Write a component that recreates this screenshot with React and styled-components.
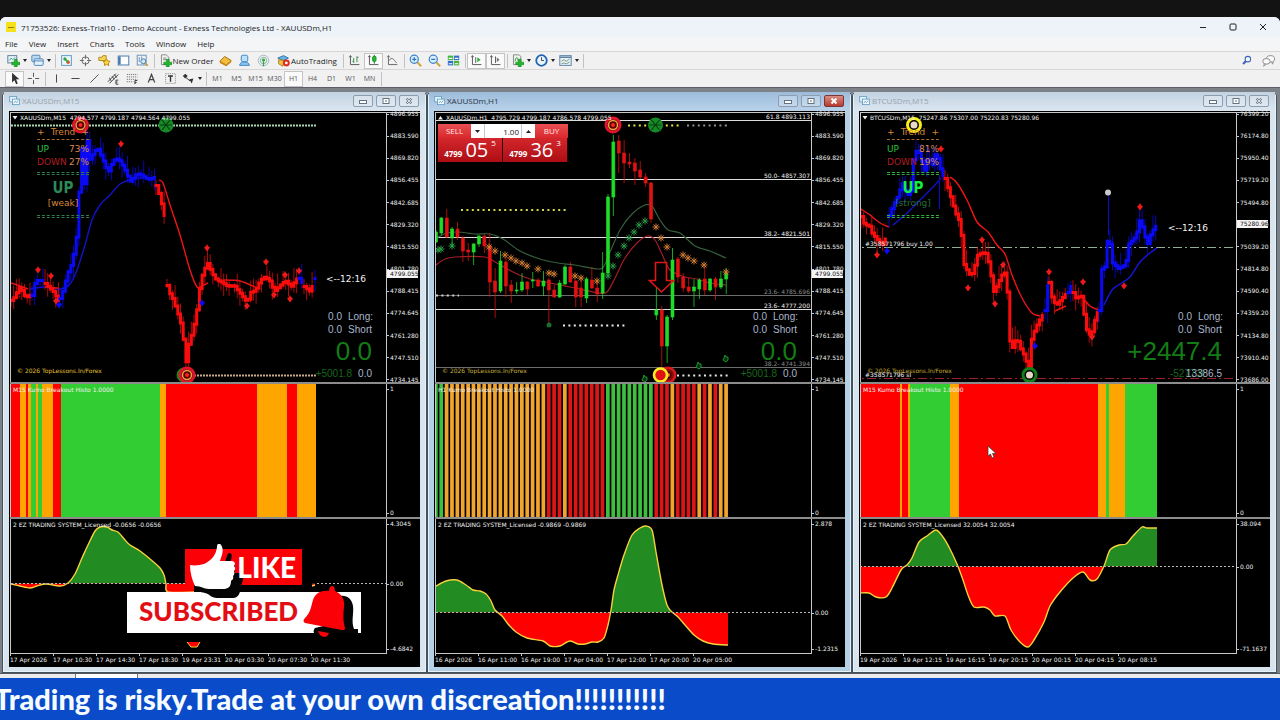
import React from "react";
import styled, { createGlobalStyle, css } from "styled-components";

const GlobalStyle = createGlobalStyle`
  * { box-sizing: border-box; }
  body { margin: 0; background: #131313; font-family: "Open Sans", "Noto Sans", sans-serif; }
  button, input { font: inherit; margin: 0; padding: 0; border: 0; background: none; color: inherit; }
  button { cursor: pointer; }
`;

const UI_FONT = `"Open Sans", "Noto Sans", sans-serif`;
const SCALE_FONT = `"DejaVu Sans", sans-serif`;
const PANEL_FONT = `"DejaVu Sans", sans-serif`;
const READOUT_FONT = `"Liberation Sans", sans-serif`;

/* ---------- application shell ---------- */

const Screen = styled.div`
  min-height: 100vh;
  display: flex;
  flex-direction: column;
  padding-top: 17px;
  background: #131313;
  overflow: hidden;
`;

const Shell = styled.div`
  flex: 1;
  display: flex;
  flex-direction: column;
  background: #f1f1f2;
  border-radius: 6px 6px 0 0;
  overflow: hidden;
  color: #1c1c1c;
`;

const AppTitle = styled.header`
  height: 20px;
  display: flex;
  align-items: center;
  gap: 5px;
  padding: 0 12px 0 6px;
  background: #edf3f8;
  font-size: 8px;
`;

const AppLogo = styled.span`
  width: 10px;
  height: 10px;
  display: flex;
  align-items: center;
  justify-content: center;
  background: #f7e11a;
  &::after { content: ""; width: 6px; height: 1px; background: #8b7d00; }
`;

const TitleText = styled.h1`
  flex: 1;
  margin: 0;
  font-size: 8px;
  font-weight: 400;
`;

const SystemButtons = styled.div`
  display: flex;
  gap: 20px;
`;

const SystemButton = styled.button`
  width: 10px;
  height: 12px;
  display: flex;
  align-items: center;
  justify-content: center;
`;

const MenuBar = styled.nav`
  height: 14px;
  display: flex;
  align-items: center;
  background: #f4f5f6;
`;

const MenuItem = styled.button`
  padding: 0 6px 0 5px;
  font-size: 8px;
  line-height: 12px;
`;

const ToolRow = styled.div`
  height: 18px;
  display: flex;
  align-items: center;
  padding-left: 5px;
  border-top: 1px solid #d6d6d6;
`;

const ToolSpacer = styled.div`
  flex: 1;
`;

const ToolButton = styled.button`
  width: ${(p) => p.$width || 19}px;
  height: 16px;
  display: flex;
  align-items: center;
  justify-content: center;
  gap: 1px;
  font-size: ${(p) => (p.$small ? 7 : 8)}px;
  color: ${(p) => (p.$small ? "#555" : "#1c1c1c")};
  white-space: nowrap;
  ${(p) => p.$pressed && css`
    background: #fafafa;
    border: 1px solid #c4c4c4;
  `}
`;

const Caret = styled.span`
  border: 2px solid transparent;
  border-top: 3px solid #222;
  border-bottom: 0;
  margin-left: 2px;
`;

const Separator = styled.span`
  width: 1px;
  height: 14px;
  margin: 0 1px 0 2px;
  background: #c2c2c2;
`;

const Workspace = styled.main`
  display: flex;
  padding: 4px 3px 0 2px;
  border-top: 1px solid #5d5f66;
  background: #7d8289;
`;

const TabStrip = styled.div`
  height: 5px;
  display: flex;
  border-top: 1px solid #55585c;
  background: #ececec;
  padding-left: 75px;
`;

const ActiveTab = styled.span`
  width: 63px;
  background: #ffffff;
  border-left: 1px solid #777;
  border-right: 1px solid #777;
`;

const Ticker = styled.footer`
  height: 42px;
  display: flex;
  align-items: center;
  overflow: hidden;
  background: #094bc9;
  color: #f6fbff;
`;

const TickerText = styled.p`
  margin: 0 0 0 -6px;
  font-family: Lato, sans-serif;
  font-size: 29px;
  font-weight: 900;
  line-height: 42px;
  white-space: nowrap;
`;

/* ---------- chart windows ---------- */

const ChartWindow = styled.section`
  position: relative;
  flex: 1;
  min-width: 0;
  padding: 0 7px 6px;
  border-radius: 4px 4px 0 0;
  background: ${(p) => (p.$active ? "#b5d0e5" : "#d8e4ee")};
  box-shadow: inset 0 0 0 1px #43525f, inset 0 0 0 2px #e8f2f9;
`;

const WindowTitle = styled.div`
  height: 19px;
  margin: 0 -5px;
  padding: 0 6px 2px 5px;
  display: flex;
  align-items: center;
  gap: 2px;
  background: ${(p) => (p.$active
    ? "linear-gradient(#9dbcdb, #b9d2ea)"
    : "linear-gradient(#c3d3e2, #dbe6f0)")};
  color: ${(p) => (p.$active ? "#2a3644" : "#97a2ad")};
`;

const WindowName = styled.h2`
  flex: 1;
  margin: 0;
  font-size: 8px;
  font-weight: 400;
`;

const FrameButtons = styled.div`
  display: flex;
  gap: 3px;
`;

const FrameButton = styled.button`
  width: 20px;
  height: 12px;
  display: flex;
  align-items: center;
  justify-content: center;
  border: 1px solid ${(p) => (p.$danger ? "#7d3434" : "#8d9dad")};
  border-radius: 2px;
  background: ${(p) => (p.$danger ? "linear-gradient(#d98c82, #b93a2e)" : "rgba(255,255,255,0.25)")};
`;

const ChartBody = styled.div`
  padding: 1px 0 0 1px;
  background: #000;
`;

const Pane = styled.div`
  display: flex;
  height: ${(p) => p.$height}px;
  border-top: ${(p) => p.$rule}px solid ${(p) => (p.$rule > 1 ? "#8c8c8c" : "#c8c8c8")};
`;

const Plot = styled.div`
  position: relative;
  flex: 1;
  min-width: 0;
  overflow: hidden;
  border-left: 1px solid #c8c8c8;
  border-right: 1px solid #c8c8c8;
`;

const Drawing = styled.svg`
  display: block;
  width: 100%;
  height: 100%;
`;

const PriceScale = styled.div`
  position: relative;
  width: 33px;
  margin: -3px 0 -2px;
  display: flex;
  flex-direction: column;
  justify-content: space-between;
`;

const SideScale = styled(PriceScale)`
  margin: 1px 0 0;
`;

const ScaleLabel = styled.span`
  display: flex;
  align-items: center;
  font-family: ${SCALE_FONT};
  font-size: 6px;
  line-height: 8px;
  color: #f0f0f0;
  &::before {
    content: "";
    width: 2px;
    height: 1px;
    margin-right: 1px;
    background: #c8c8c8;
  }
`;

const PriceTag = styled.span`
  position: absolute;
  left: 0;
  right: 2px;
  top: ${(p) => p.$top}px;
  padding-left: 3px;
  background: #f4f4f4;
  color: #111;
  font-family: ${SCALE_FONT};
  font-size: 6px;
  line-height: 8px;
`;

const ZeroTag = styled(ScaleLabel)`
  position: absolute;
  left: 0;
  top: ${(p) => p.$top}px;
`;

const TimeScale = styled.div`
  height: 14px;
  display: flex;
  margin-right: 33px;
  border-top: 1px solid #c8c8c8;
  overflow: hidden;
`;

const TimeLabel = styled.span`
  flex: 0 0 43px;
  min-width: 0;
  font-family: ${SCALE_FONT};
  font-size: 6px;
  line-height: 12px;
  color: #f0f0f0;
  white-space: nowrap;
  background: linear-gradient(#c8c8c8, #c8c8c8) 0 0 / 1px 2px no-repeat;
`;

/* ---------- overlays on the price pane ---------- */

const TrendPanel = styled.div`
  position: absolute;
  left: 26px;
  top: 13px;
  width: 52px;
  font-family: ${PANEL_FONT};
  font-size: 9px;
  line-height: 13px;
  color: #d9893a;
`;

const TrendRow = styled.div`
  display: flex;
  justify-content: ${(p) => (p.$center ? "center" : "space-between")};
  color: ${(p) => p.$color || "inherit"};
`;

const TrendSide = styled.span`
  color: ${(p) => (p.$up ? "#27c23c" : "#b31d24")};
`;

const TrendRule = styled.div`
  height: ${(p) => (p.$double ? 3 : 1)}px;
  margin: ${(p) => p.$gap || "0"};
  border-top: 1px dashed ${(p) => p.$color};
  border-bottom: ${(p) => (p.$double ? `1px dashed ${p.$color}` : "0")};
`;

const TrendCall = styled.div`
  font-family: "DejaVu Sans Condensed", ${READOUT_FONT};
  font-size: 15px;
  line-height: 18px;
  font-weight: 700;
  text-align: center;
  color: ${(p) => p.$color};
`;

const Readout = styled.div`
  position: absolute;
  right: 14px;
  bottom: 2px;
  font-family: ${READOUT_FONT};
  font-size: 10px;
  line-height: 13px;
  color: #a9b6cc;
  text-align: right;
`;

const ReadoutRow = styled.div`
  display: flex;
  justify-content: flex-end;
  gap: ${(p) => p.$gap}px;
`;

const ReadoutName = styled.span`
  width: 24px;
`;

const ReadoutTotal = styled.div`
  font-size: 26px;
  line-height: 31px;
  color: #137c15;
`;

const ReadoutGain = styled.span`
  color: #17671b;
  margin-right: ${(p) => (p.$crowded ? -24 : 0)}px;
`;

const TradePanel = styled.form`
  position: absolute;
  left: 2px;
  top: 11px;
  width: 130px;
  display: grid;
  grid-template-columns: 33px 32px 32px 33px;
  grid-template-rows: 14px 24px;
  font-family: ${UI_FONT};
  color: #fff;
`;

const TradeTab = styled.button`
  background: linear-gradient(#ea5052, #d8282c);
  font-size: 8px;
  line-height: 14px;
  color: #ffe4e4;
`;

const VolumeBox = styled.div`
  grid-column: span 2;
  display: flex;
  background: #fff;
  color: #222;
`;

const VolumeInput = styled.input`
  flex: 1;
  min-width: 0;
  text-align: right;
  padding-right: 2px;
  font-size: 8px;
  border-left: 1px solid #c8c8c8;
  border-right: 1px solid #c8c8c8;
`;

const VolumeStep = styled.button`
  width: 13px;
  display: flex;
  align-items: center;
  justify-content: center;
`;

const TradePrice = styled.button`
  grid-column: span 2;
  display: flex;
  align-items: flex-end;
  justify-content: center;
  gap: 3px;
  padding-bottom: 2px;
  border-right: 1px solid #2a0000;
  background: linear-gradient(#d3272c, #ad0d14);
  font-size: 8px;
  font-weight: 700;
  line-height: 12px;
`;

const PriceBig = styled.span`
  font-size: 20px;
  font-weight: 400;
  line-height: 20px;
`;

const PricePip = styled.sup`
  align-self: flex-start;
  font-size: 8px;
  font-weight: 400;
  line-height: 10px;
`;

/* ---------- stream banner ---------- */

const StreamBanner = styled.aside`
  position: absolute;
  left: 125px;
  top: 452px;
  width: 240px;
  height: 98px;
  padding-top: 5px;
  font-family: Lato, sans-serif;
  font-weight: 900;
`;

const LikeBox = styled.div`
  width: 117px;
  height: 36px;
  margin-left: 58px;
  padding-right: 6px;
  background: #fb0007;
  color: #fff;
  font-size: 28px;
  line-height: 36px;
  text-align: right;
`;

const LikeWord = styled.span`
  position: relative;
  z-index: 1;
`;

const SubscribedBox = styled.div`
  width: 234px;
  height: 41px;
  margin-top: 7px;
  padding-left: 12px;
  background: #fff;
  color: #e30d14;
  font-size: 26px;
  line-height: 39px;
`;

const BannerArt = styled.svg`
  position: absolute;
  inset: 0;
`;

const Pointer = styled.svg`
  position: absolute;
  left: 135px;
  top: 353px;
`;

/* ---------- icons ---------- */

const Icon = ({ children, size = 14 }) => (
  <svg width={size} height={size} viewBox="0 0 16 16" fill="none" strokeWidth="1.2" aria-hidden="true">{children}</svg>
);

const GreenPlus = () => (
  <path d="M9 6.500h3.500V10H16v3.200h-3.500V16H9v-2.800H5.800V10H9z" fill="#22b52b" stroke="#0b7a18" strokeWidth=".6" />
);

const ICONS = {
  newChart: <><rect x="1" y="2" width="11" height="9" fill="#e9f3fb" stroke="#5d7f9e" /><path d="M3 8l2-3 2 2 3-3" stroke="#4a8" /><GreenPlus /></>,
  profiles: <><rect x="1" y="1.500" width="10" height="8" rx="1" fill="#bcd9f1" stroke="#4f87b6" /><rect x="4" y="6" width="11" height="8" rx="1" fill="#e3f1fc" stroke="#4f87b6" /><path d="M4 8.500h11" stroke="#4f87b6" /></>,
  market: <><rect x="2" y="2" width="12" height="12" fill="#eef7fd" stroke="#5c9cc7" /><circle cx="6" cy="6" r="2" fill="#2ba83a" /><circle cx="10" cy="10" r="2.200" fill="#e2562c" /><path d="M6 6l4 4" stroke="#2ba83a" strokeWidth="2" /></>,
  data: <g stroke="#6b6b6b"><circle cx="8" cy="8" r="4.500" /><path d="M8 1v5M8 10v5M1 8h5M10 8h5" /></g>,
  navigator: <><path d="M1 4h4l1-2h4v6H1z" fill="#f6d65a" stroke="#b48c1a" /><path d="M10.500 6l1.400 2.700 3 .4-2.200 2.100.5 3-2.700-1.400-2.700 1.400.5-3L6 9.100l3-.4z" fill="#ffd83c" stroke="#b98a10" /></>,
  terminal: <><rect x="1.500" y="2.500" width="13" height="11" fill="#fff" stroke="#4779ad" /><path d="M3 3v10" stroke="#4779ad" strokeWidth="3" /></>,
  tester: <><rect x="1.500" y="1.500" width="11" height="12" fill="#eaf3fa" stroke="#6d93b5" /><path d="M4 4v6M7 3v4" stroke="#6d93b5" /><circle cx="9" cy="9" r="3" fill="#cfe6f6" stroke="#4a7da8" /><path d="M11.500 11.500l3 3" stroke="#c79b2e" strokeWidth="2" /></>,
  order: <><path d="M3 1h6l3 3v9H3z" fill="#f2f2f2" stroke="#8a8a8a" /><path d="M5 5h4M5 7h4" stroke="#8a8a8a" /><GreenPlus /></>,
  editor: <><path d="M1 9l6-6 8 5-6 6z" fill="#f3bd3f" stroke="#a76f0c" /><path d="M1 9l8 4 6-5v2l-6 5-8-4z" fill="#c98716" /></>,
  metaquotes: <><rect x="4" y="1.500" width="8" height="8" rx="2" fill="#bfe0f8" stroke="#3e8ac7" /><path d="M2 14c0-3 3-4 6-4s6 1 6 4z" fill="#8cc4ee" stroke="#3e8ac7" /></>,
  signal: <g stroke="#a5b6c4"><circle cx="8" cy="8" r="6.500" /><circle cx="8" cy="8" r="4" stroke="#7fb89a" /><circle cx="8" cy="7.500" r="2" fill="#35a84e" stroke="none" /><path d="M8 9v6" stroke="#35a84e" strokeWidth="1.500" /></g>,
  auto: <><path d="M1 5l7-3 6 3-6 3z" fill="#6bb3e6" stroke="#2f78b0" /><path d="M2 7v5l5 3 2-7z" fill="#f1c24a" stroke="#b1851c" /><circle cx="11.500" cy="11" r="4.200" fill="#dd2c1e" /><rect x="10" y="9.500" width="3" height="3" fill="#fff" /></>,
  bars: <g stroke="#5d5d5d"><path d="M3 2v11h11M1.500 4L3 2l1.500 2" /><path d="M7 5v6M11 3v7M11 4h2M5.500 9H7" stroke="#3b8f4b" /></g>,
  candles: <g stroke="#5d5d5d"><path d="M3 2v11h11M1.500 4L3 2l1.500 2" /><path d="M9 1v11" stroke="#138a22" /><rect x="7" y="3" width="4" height="6" rx="1" fill="#27c138" stroke="#138a22" /></g>,
  line: <g stroke="#6b6b6b"><path d="M3 2v11h11M1.500 4L3 2l1.500 2" /><path d="M4 8c3-5 5-2 9 3" /></g>,
  zoomIn: <><path d="M10 10l5 5" stroke="#cfa43a" strokeWidth="2.500" /><circle cx="6.500" cy="6.500" r="5" fill="#d8eefc" stroke="#3d83c5" strokeWidth="1.500" /><path d="M4 6.500h5M6.500 4v5" stroke="#2f78bd" strokeWidth="1.500" /></>,
  zoomOut: <><path d="M10 10l5 5" stroke="#cfa43a" strokeWidth="2.500" /><circle cx="6.500" cy="6.500" r="5" fill="#d8eefc" stroke="#3d83c5" strokeWidth="1.500" /><path d="M4 6.500h5" stroke="#2f78bd" strokeWidth="1.500" /></>,
  tile: <><rect x="1" y="2" width="6.500" height="5.500" fill="#46b33b" /><rect x="8.500" y="2" width="6.500" height="5.500" fill="#2f70c8" /><rect x="1" y="8.500" width="6.500" height="5.500" fill="#2f70c8" /><rect x="8.500" y="8.500" width="6.500" height="5.500" fill="#46b33b" /><path d="M2 5.500h4.500M9.500 5.500H14M2 12h4.500M9.500 12H14" stroke="#fff" strokeWidth="1.500" /></>,
  scroll: <g stroke="#5d5d5d"><path d="M3 2v11h11M1.500 4L3 2l1.500 2M7 4v7" /><path d="M9 4l4 3-4 3z" fill="#27a838" stroke="none" /></g>,
  shift: <g stroke="#5d5d5d"><path d="M3 2v11h11M1.500 4L3 2l1.500 2M8 3v8" /><path d="M9.500 4l3.500 3-3.500 3z" fill="#777" stroke="none" /></g>,
  indicators: <><path d="M3 1h7l2 2v10H3z" fill="#eaf5ea" stroke="#8a8a8a" /><path d="M5 9c1-6 3-6 4 0" stroke="#3a8d48" /><GreenPlus /></>,
  periods: <><circle cx="8" cy="8" r="6.500" fill="#e8f3fc" stroke="#1f64b4" strokeWidth="2.200" /><path d="M8 4v4h3" stroke="#444" /></>,
  templates: <><rect x="1" y="2" width="14" height="12" fill="#eaf2f8" stroke="#5c84a8" /><path d="M1 4h14" stroke="#5c84a8" strokeWidth="2" /><path d="M3 9l3-2 3 2 4-3M3 12l3-1 3 1 4-2" stroke="#739a7c" /></>,
  arrow: <path d="M5 1v12l3-3 2 5 2-1-2-5h4z" fill="#333" />,
  cross: <path d="M8 1v5M8 10v5M1 8h5M10 8h5" stroke="#555" />,
  vline: <path d="M8 3v10" stroke="#444" />,
  hline: <path d="M3 8h10" stroke="#444" />,
  trend: <path d="M3 13L13 3" stroke="#555" />,
  channel: <g stroke="#444"><path d="M1 12L11 2M3 14L14 3M3 7l2 4M6 5l3 4M9 3l3 4" /><path d="M14 10h-3v5h3M11 12.500h2" /></g>,
  fibo: <g stroke="#777" strokeDasharray="1.500 1"><path d="M1 3h13M1 6h13M1 9h13M1 12h8" /><path d="M14 10.500h-3V15M11 13h2" stroke="#333" strokeDasharray="none" /></g>,
  textTool: <path d="M4 13L8 3l4 10M5.500 9.500h5" stroke="#444" strokeWidth="1.500" />,
  labelTool: <><rect x="2" y="2" width="12" height="12" stroke="#999" strokeDasharray="1.500 1" /><path d="M5 5h6M8 5v7" stroke="#333" strokeWidth="1.700" /></>,
  shapes: <g fill="#333"><path d="M1 5l3-3 3 3-3 3z" /><path d="M5 7l5 4" stroke="#333" /><path d="M9 9l5-1-2 6z" /></g>,
  chartDoc: <><rect x="1" y="2" width="10" height="8" fill="#e6f3fb" stroke="#5f9cc0" /><rect x="5" y="6" width="10" height="8" fill="#f4fafd" stroke="#5f9cc0" /><path d="M7 12l2-3 2 2 2-3" stroke="#5f9cc0" /></>,
  search: <><circle cx="10" cy="6" r="4" fill="#eef5ff" stroke="#3f62b8" strokeWidth="1.500" /><path d="M7 9l-4 4" stroke="#3f62b8" strokeWidth="3" /></>,
  chat: <g fill="#fafafa" stroke="#8d8d8d"><ellipse cx="10.500" cy="6" rx="5" ry="4" /><path d="M12 9.500l1 3 1-4" /><ellipse cx="5.500" cy="9" rx="4.500" ry="3.500" /><path d="M3 12l-1 3 3-2.500" /></g>,
};

const MAIN_TOOLS = [
  { icon: "newChart", label: "New chart", menu: true },
  { icon: "profiles", label: "Profiles", menu: true },
  null,
  { icon: "market", label: "Market Watch" },
  { icon: "data", label: "Data Window" },
  { icon: "navigator", label: "Navigator" },
  { icon: "terminal", label: "Terminal" },
  { icon: "tester", label: "Strategy Tester" },
  null,
  { icon: "order", text: "New Order", width: 60 },
  { icon: "editor", label: "MetaEditor" },
  { icon: "metaquotes", label: "Community" },
  { icon: "signal", label: "Signals" },
  { icon: "auto", text: "AutoTrading", width: 68 },
  null,
  { icon: "bars", label: "Bar chart" },
  { icon: "candles", label: "Candlesticks", pressed: true },
  { icon: "line", label: "Line chart" },
  null,
  { icon: "zoomIn", label: "Zoom in" },
  { icon: "zoomOut", label: "Zoom out" },
  { icon: "tile", label: "Tile windows" },
  null,
  { icon: "scroll", label: "Auto scroll", pressed: true },
  { icon: "shift", label: "Chart shift", pressed: true },
  null,
  { icon: "indicators", label: "Indicators", menu: true },
  { icon: "periods", label: "Periods", menu: true },
  { icon: "templates", label: "Templates", menu: true },
  null,
];

const LINE_TOOLS = [
  { icon: "arrow", label: "Cursor", pressed: true },
  { icon: "cross", label: "Crosshair" },
  null,
  { icon: "vline", label: "Vertical line" },
  { icon: "hline", label: "Horizontal line" },
  { icon: "trend", label: "Trendline" },
  { icon: "channel", label: "Channel" },
  { icon: "fibo", label: "Fibonacci" },
  { icon: "textTool", label: "Text" },
  { icon: "labelTool", label: "Text label" },
  { icon: "shapes", label: "Arrows", menu: true },
  null,
  ...["M1", "M5", "M15", "M30", "H1", "H4", "D1", "W1", "MN"].map((text) => ({
    text, small: true, pressed: text === "H1",
  })),
  null,
];

const Tools = ({ items }) => items.map((tool, i) => (tool ? (
  <ToolButton
    key={i}
    type="button"
    aria-label={tool.label || tool.text}
    $pressed={tool.pressed}
    $small={tool.small}
    $width={tool.menu ? 24 : tool.width}
  >
    {tool.icon && <Icon size={13}>{ICONS[tool.icon]}</Icon>}
    {tool.text}
    {tool.menu && <Caret />}
  </ToolButton>
) : <Separator key={i} />));

/* ---------- chart primitives ---------- */

const RED = "#fb0d0d";
const BLUE = "#0a0af5";
const LIME = "#32cd32";
const ORANGE = "#ffa500";

/* Smooth curve through the points, without the leading move command. */
const curve = (points) => points.slice(1).map((p, i) => {
  const before = points[i - 1] || points[i];
  const from = points[i];
  const after = points[i + 2] || p;
  const c1 = [from[0] + (p[0] - before[0]) / 7, from[1] + (p[1] - before[1]) / 7];
  const c2 = [p[0] - (after[0] - from[0]) / 7, p[1] - (after[1] - from[1]) / 7];
  return `C${[c1, c2, p].map((q) => q.map((v) => v.toFixed(1)).join(" ")).join(",")}`;
}).join("");

function yAt(points, x) {
  for (let i = 1; i < points.length; i += 1) {
    const [x0, y0] = points[i - 1];
    const [x1, y1] = points[i];
    if (x <= x1) return y0 + ((y1 - y0) * (x - x0)) / (x1 - x0 || 1);
  }
  return points[points.length - 1][1];
}

/* Dense M15 bars: a body for every step along the run, wicks of varying reach. */
const BarRun = ({ color, points }) => {
  const bodies = [];
  const wicks = [];
  const last = points[points.length - 1][0];
  let prev = points[0][1];
  for (let x = points[0][0], i = 0; x <= last + 1; x += 2.7, i += 1) {
    const y = yAt(points, x);
    const top = Math.min(prev, y) - 1;
    const low = Math.max(prev, y) + 2;
    const reach = (Math.round(x) * 37 + i * 11) % 14;
    bodies.push(`M${x} ${top}V${low}`);
    wicks.push(`M${x} ${top - reach}V${low + ((reach * 5) % 12)}`);
    prev = y;
  }
  return (
    <g stroke={color} fill="none">
      <path d={bodies.join("")} strokeWidth="3" />
      <path d={wicks.join("")} strokeWidth="1" opacity=".7" />
    </g>
  );
};

const Average = ({ color, points, width = 1.4 }) => (
  <path d={`M${points[0].join(" ")}${curve(points)}`} fill="none" stroke={color} strokeWidth={width} />
);

const Diamonds = ({ color, at }) => (
  <path fill={color} d={at.map(([x, y]) => `M${x} ${y - 4}l1 2 2 1.500-3 4-3-4 2-1.500z`).join("")} />
);

const Dots = ({ x1, x2, y, color, gap = "2 1" }) => (
  <path d={`M${x1} ${y}H${x2}`} stroke={color} strokeWidth="2" strokeDasharray={gap} />
);

const Target = ({ x, y, outer, ring, core }) => (
  <g>
    <circle cx={x} cy={y} r="7" fill="#140404" stroke={outer} strokeWidth="3" />
    <circle cx={x} cy={y} r="4.500" fill="#500" stroke={ring} strokeWidth="1.500" />
    <circle cx={x} cy={y} r="2" fill={core} />
  </g>
);

const Orb = ({ x, y }) => (
  <g>
    <circle cx={x} cy={y} r="7.500" fill="#168a25" />
    <path d={`M${x - 6} ${y}h12M${x - 4} ${y - 5}l8 10M${x + 4} ${y - 5}l-8 10`} stroke="#0a3d10" strokeWidth="1.200" />
  </g>
);

const Spot = ({ x, y, ring }) => (
  <g>
    <circle cx={x} cy={y} r="6.500" fill="#000" stroke={ring} strokeWidth="3" />
    <circle cx={x} cy={y} r="3.500" fill="#e9d9c8" />
  </g>
);

const Flowers = ({ color, at }) => (
  <path
    stroke={color}
    strokeWidth="1"
    d={at.map(([x, y]) => `M${x - 3.5} ${y}h7M${x} ${y - 3.5}v7M${x - 2.5} ${y - 2.5}l5 5M${x + 2.5} ${y - 2.5}l-5 5`).join("")}
  />
);

const ChartText = styled.text`
  font-family: ${(p) => p.$font || SCALE_FONT};
  font-size: ${(p) => p.$size || 6}px;
  fill: ${(p) => p.$color || "#f2f2f2"};
  white-space: pre;
`;

const Indicator = ({ id, runs, zero, dots = [[0, 2400]] }) => (
  <>
    <clipPath id={`${id}-up`}><rect x="0" y="500" width="1300" height={zero - 500} /></clipPath>
    <clipPath id={`${id}-down`}><rect x="0" y={zero} width="1300" height="100" /></clipPath>
    {runs.map((points, i) => {
      const start = points[0][0];
      const end = points[points.length - 1][0];
      const shape = curve(points);
      const area = `M${start} ${zero}L${points[0].join(" ")}${shape}L${end} ${zero}Z`;
      return (
        <g key={i}>
          <path d={area} fill="#228b22" clipPath={`url(#${id}-up)`} />
          <path d={area} fill="#ff0000" clipPath={`url(#${id}-down)`} />
          <path d={`M${points[0].join(" ")}${shape}`} fill="none" stroke="#f5d23c" strokeWidth="1.400" />
        </g>
      );
    })}
    {dots.map(([a, b]) => (
      <path key={a} d={`M${a} ${zero}H${b}`} stroke="#b9b9b9" strokeDasharray="2 2" />
    ))}
  </>
);

/* ---------- XAUUSDm M15 ---------- */

const goldM15Runs = [
  [RED, [[11, 300], [14, 297], [18, 289], [20, 286], [24, 295], [29, 297], [31, 292]]],
  [BLUE, [[32, 295], [34, 284], [37, 280], [43, 280]]],
  [RED, [[45, 283], [50, 288], [54, 292], [58, 300]]],
  [BLUE, [[60, 298], [63, 290], [67, 274], [72, 262], [76, 240], [79, 190], [81, 138], [84, 188], [87, 140], [89, 160], [92, 155], [97, 147], [103, 160], [108, 172], [113, 160], [118, 158], [124, 168], [130, 181], [137, 173], [142, 175], [148, 179], [154, 177]]],
  [RED, [[156, 185], [160, 197], [164, 215]]],
  [RED, [[167, 285], [169, 292], [172, 297], [176, 308], [180, 320], [183, 335], [185, 372], [187, 348], [190, 340], [193, 328], [196, 315], [199, 290], [202, 275], [207, 262], [212, 273], [216, 279], [222, 282], [228, 286], [234, 285], [240, 293], [247, 302], [250, 292], [255, 290], [260, 280], [265, 276], [270, 281], [274, 291], [280, 285], [285, 280], [291, 286], [297, 278]]],
  [BLUE, [[299, 278], [301, 282]]],
  [RED, [[304, 286], [310, 291], [313, 284]]],
  [BLUE, [[315, 278], [316, 276]]],
];

const GoldM15Drawing = () => (
  <>
    <Dots x1={11} x2={316} y={125.5} color="#a8d8b4" />
    <Average color="#e01616" points={[[11, 283], [20, 286], [28, 289]]} />
    <Average color="#1212c8" points={[[30, 289], [44, 287], [60, 289], [70, 284], [77, 270], [85, 245], [92, 220], [100, 205], [110, 195], [120, 184], [130, 180], [140, 178], [152, 178]]} />
    <Average color="#e01616" points={[[45, 287], [58, 288]]} />
    <Average color="#f01414" points={[[159, 180], [163, 183], [170, 205], [180, 235], [190, 270], [197, 287], [202, 286], [208, 283]]} />
    <Average color="#e01616" points={[[223, 280], [240, 281], [255, 287]]} />
    {goldM15Runs.map(([color, points], i) => <BarRun key={i} color={color} points={points} />)}
    <Diamonds color="#f01a1a" at={[[38, 270], [51, 276], [56, 301], [121, 144], [207, 248], [247, 306], [266, 262], [274, 295], [285, 275], [290, 299], [299, 271]]} />
    <Diamonds color={BLUE} at={[[59, 305], [202, 303]]} />
    <Target x={80.5} y={125} outer="#e3122c" ring="#f0a33a" core="#ff2222" />
    <Orb x={166} y={125} />
    <Dots x1={188} x2={316} y={375.5} color="#c9a986" />
    <circle cx="184" cy="375" r="7.500" fill="#118a1b" />
    <Target x={187} y={375} outer="#e3122c" ring="#f0a33a" core="#ff2222" />
    <path d="M12.500 116h5l-2.500 3.500z" fill="#eee" />
    <ChartText x="20" y="120">XAUUSDm,M15  4794.577 4799.187 4794.564 4799.055</ChartText>
    <ChartText x="326" y="282" $font={PANEL_FONT} $size={9}>{"<--12:16"}</ChartText>
    <ChartText x="17" y="373" $color="#e2c136">© 2026 TopLessons.In/Forex</ChartText>
  </>
);

/* ---------- XAUUSDm H1: [up, high, top, bottom, low] ---------- */

const H1_STEP = 5.375;
const goldH1Bars = [
  [1, 230, 232, 242, 243], [1, 217, 218, 233, 235], [0, 209, 218, 237, 238], [1, 227, 229, 238, 247], [0, 222, 229, 237, 240],
  [0, 236, 238, 251, 262], [0, 243, 250, 252, 261], [1, 243, 244, 252, 265], [1, 235, 236, 244, 247], [0, 234, 236, 246, 253],
  [0, 233, 246, 282, 297], [0, 268, 281, 292, 318], [1, 251, 261, 291, 293], [0, 257, 262, 286, 297], [0, 280, 285, 291, 303],
  [1, 282, 290, 291, 294], [1, 273, 282, 290, 292], [0, 281, 282, 289, 295], [1, 272, 280, 281, 288], [0, 278, 280, 286, 287],
  [1, 271, 281, 286, 296], [0, 278, 280, 290, 323], [0, 285, 290, 297, 298], [1, 280, 283, 297, 298], [1, 265, 267, 284, 285],
  [0, 262, 267, 282, 283], [0, 280, 281, 297, 307], [0, 280, 288, 297, 307], [1, 277, 279, 298, 303], [0, 267, 280, 288, 289],
  [0, 282, 288, 294, 302], [1, 252, 273, 293, 299], [1, 194, 197, 273, 275], [1, 135, 142, 197, 216], [0, 135, 141, 153, 173],
  [0, 140, 153, 163, 183], [0, 153, 162, 164, 168], [0, 158, 163, 171, 185], [0, 161, 170, 177, 179], [0, 173, 177, 183, 187],
  [0, 182, 183, 219, 223], [1, 287, 310, 315, 320], [0, 306, 310, 346, 373], [1, 315, 317, 346, 363], [1, 248, 260, 317, 320],
  [0, 257, 259, 277, 283], [0, 273, 277, 288, 292], [0, 278, 287, 291, 293], [1, 279, 287, 291, 307], [1, 278, 280, 289, 299],
  [0, 267, 279, 290, 295], [1, 278, 279, 290, 292], [0, 277, 279, 287, 300], [1, 271, 279, 287, 289], [1, 268, 273, 279, 294],
];

const goldLevels = [
  [120.5, "61.8 4893.113", true],
  [179.5, "50.0- 4857.307", true],
  [237.5, "38.2- 4821.501", true],
  [295.5, "23.6- 4785.696", false],
  [309.5, "23.6- 4777.200", true],
  [367.5, "38.2- 4741.394", false],
];

const GoldH1Drawing = () => (
  <>
    {goldLevels.map(([y, name, strong]) => (
      <path key={name} d={`M0 ${y}H2400`} stroke={strong ? "#dcdcdc" : "#6c6c6c"} strokeWidth="1.200" />
    ))}
    <Dots x1={461} x2={567} y={210} color="#d8d84a" gap="2 3.400" />
    <Dots x1={436} x2={459} y={295.5} color="#d0d0d0" gap="2 3.400" />
    <Dots x1={563} x2={626} y={325.5} color="#ececec" gap="2 3.400" />
    <Dots x1={628} x2={682} y={125.5} color="#e8e83a" gap="2 3.400" />
    <Dots x1={687} x2={728} y={125.5} color="#8f8f8f" gap="2 3.400" />
    <Average color="#35603c" width={1.2} points={[[436, 238], [447, 233], [458, 232], [475, 234], [490, 234], [503, 239], [520, 251], [540, 259], [558, 263], [575, 265], [598, 269], [604, 266], [610, 252], [620, 230], [632, 214], [645, 205], [652, 206], [660, 220], [668, 230], [680, 233], [695, 246], [710, 251], [726, 258]]} />
    <Average color="#a31c28" width={1.2} points={[[436, 265], [445, 259], [455, 257], [485, 257], [495, 262], [515, 273], [530, 279], [545, 282], [575, 288], [598, 293], [607, 292], [615, 278], [625, 258], [638, 242], [648, 236], [655, 240], [662, 254], [670, 270], [685, 277], [697, 279], [710, 283], [726, 285]]} />
    <Flowers color="#2a9644" at={[[438, 250], [441, 249], [452, 246], [608, 276], [613, 266], [618, 255], [624, 246], [629, 238], [634, 232], [639, 225], [645, 221]]} />
    {goldH1Bars.map(([up, high, top, bottom, low], i) => {
      const x = 436 + i * H1_STEP;
      const color = up ? "#1edc28" : "#e01212";
      return (
        <g key={i} fill={color} stroke={color}>
          <path d={`M${x} ${high}V${low}`} strokeWidth="1" opacity=".75" />
          <rect x={x - 1.5} y={top} width="3" height={bottom - top} strokeWidth=".6" />
        </g>
      );
    })}
    <Flowers color="#cf7a30" at={[[489, 247], [495, 251], [505, 255], [511, 258], [516, 261], [522, 263], [527, 266], [538, 269], [549, 273], [554, 274], [575, 276], [581, 278], [597, 281], [656, 227], [661, 238], [667, 247], [683, 255], [688, 258], [694, 261], [704, 265], [726, 272]]} />
    <path d="M655.500 262.500h11v18h7l-12 11.500-12-11.500h6z" fill="none" stroke="#e01616" strokeWidth="1.600" />
    <circle cx="549" cy="325" r="2.500" fill="#1a6e2a" />
    {[[645, 378], [699, 365], [726, 358]].map(([x, y]) => (
      <path key={x} d={`M${x - 1} ${y - 3}l1 2h2v3l-2 2-3-2 1-2z`} fill="#07300e" stroke="#18962c" strokeWidth="1" />
    ))}
    <Target x={613} y={125} outer="#e3122c" ring="#f0a33a" core="#ff2222" />
    <Orb x={655.5} y={125} />
    <Dots x1={677} x2={728} y={375.5} color="#e6e6e6" gap="2 3.400" />
    <Target x={668} y={375} outer="#d81818" ring="#8a1010" core="#e07a20" />
    <circle cx="660.500" cy="375" r="6.500" fill="#e01212" stroke="#ffee22" strokeWidth="2.600" />
    <path d="M438 119.500h5l-2.500-3.500z" fill="#eee" />
    <ChartText x="446" y="120">XAUUSDm,H1  4795.729 4799.187 4786.578 4799.055</ChartText>
    <ChartText x="442" y="373" $color="#c8b23e">© 2026 TopLessons.In/Forex</ChartText>
  </>
);

const LevelNames = () => goldLevels.map(([y, name, strong]) => (
  <ChartText key={name} x="100%" dx="-1" y={y - 115} textAnchor="end" $color={strong ? "#f2f2f2" : "#8c8c8c"}>
    {name}
  </ChartText>
));

/* ---------- BTCUSDm M15 ---------- */

const btcRuns = [
  [RED, [[861, 216], [865, 226], [868, 223], [872, 233], [878, 240], [884, 245], [886, 235]]],
  [BLUE, [[889, 215], [893, 205], [898, 195], [902, 182], [907, 195], [911, 190], [914, 150], [919, 152], [924, 170], [928, 155], [932, 165], [936, 150], [939, 165], [943, 175]]],
  [RED, [[945, 178], [950, 195], [955, 212], [960, 222], [964, 265], [970, 275], [973, 272], [977, 255], [982, 252], [986, 253], [990, 268], [993, 292], [997, 285], [1001, 275], [1005, 272], [1008, 300], [1010, 345], [1014, 348], [1016, 335], [1020, 347], [1025, 357], [1029, 372], [1031, 340], [1035, 328], [1038, 322], [1042, 315]]],
  [BLUE, [[1045, 310], [1047, 285]]],
  [RED, [[1049, 282], [1052, 298], [1056, 305], [1060, 300], [1065, 294]]],
  [BLUE, [[1068, 292], [1070, 286]]],
  [RED, [[1073, 292], [1076, 298], [1081, 295], [1084, 315], [1087, 332], [1091, 335], [1095, 318], [1097, 312]]],
  [BLUE, [[1099, 310], [1100, 270], [1105, 266], [1108, 230], [1110, 245], [1112, 262], [1118, 268], [1124, 265], [1125, 275], [1127, 245], [1132, 240], [1136, 235], [1140, 218], [1144, 233], [1147, 245], [1151, 232], [1157, 224]]],
];

const BtcDrawing = () => (
  <>
    <path d="M0 247.500H2400" stroke="#8fae94" strokeDasharray="9 3 2 3" />
    <path d="M0 378.500H2400" stroke="#9c1f2a" strokeDasharray="9 3 2 3" />
    <Average color="#f01414" points={[[861, 209], [870, 215], [880, 223], [889, 227]]} />
    <Average color="#1212c8" points={[[893, 225], [905, 215], [920, 200], [935, 185], [941, 178]]} />
    <Average color="#f01414" points={[[950, 177], [957, 183], [967, 200], [977, 222], [988, 232], [997, 245], [1005, 254], [1012, 275], [1022, 298], [1032, 313], [1040, 316]]} />
    <Average color="#f01414" points={[[1055, 311], [1066, 306]]} />
    <Average color="#f01414" points={[[1083, 298], [1090, 306], [1098, 310]]} />
    <Average color="#1515e0" points={[[1104, 305], [1112, 290], [1120, 284], [1130, 277], [1140, 262], [1150, 253], [1157, 248]]} />
    {btcRuns.map(([color, points], i) => <BarRun key={i} color={color} points={points} />)}
    <path d="M1108.500 195V235M939.500 175V209" stroke="#0a0ac8" />
    <Diamonds color="#f01a1a" at={[[877, 255], [941, 149], [968, 288], [982, 240], [995, 304], [1003, 265], [1049, 272], [1083, 282], [1092, 337], [1124, 286], [1140, 207]]} />
    <Diamonds color={BLUE} at={[[887, 251], [1035, 346]]} />
    <circle cx="1108" cy="192.500" r="3" fill="#c9c9c9" />
    <Spot x={914} y={125} ring="#f5ee1a" />
    <path d="M862.500 116h5l-2.500 3.500z" fill="#eee" />
    <ChartText x="870" y="120">BTCUSDm,M15  75247.86 75307.00 75220.83 75280.96</ChartText>
    <ChartText x="1168" y="231" $font={PANEL_FONT} $size={9}>{"<--12:16"}</ChartText>
    <ChartText x="865" y="246">#358571796 buy 1.00</ChartText>
    <ChartText x="867" y="373" $color="#c4a82e">© 2026 TopLessons.In/Forex</ChartText>
    <ChartText x="865" y="377">#358571796 sl</ChartText>
    <Spot x={1029.5} y={375} ring="#0f7d18" />
  </>
);

/* ---------- histogram bands ---------- */

const goldM15Bands = [[11, 20, RED], [20, 26, ORANGE], [26, 28, RED], [28, 31, ORANGE], [31, 36, LIME], [36, 38, ORANGE], [38, 42, LIME], [42, 53, ORANGE], [53, 61, RED], [61, 160, LIME], [160, 166, ORANGE], [166, 257, RED], [257, 287, ORANGE], [287, 297, RED], [297, 316, ORANGE]];
const btcBands = [[861, 900, RED], [900, 902, ORANGE], [902, 908, RED], [908, 910, ORANGE], [910, 950, LIME], [950, 959, ORANGE], [959, 1098, RED], [1098, 1106, ORANGE], [1106, 1109, LIME], [1109, 1125, ORANGE], [1125, 1157, LIME]];
const H1_PATTERN = "GG" + "O".repeat(19) + "RRRO" + "R".repeat(7) + "G".repeat(9) + "RRRO" + "RRRR" + "ORORO" + "O";
const H1_COLORS = { G: "#3fbf3f", O: "#f2a52c", R: "#dc1616" };
const goldH1Bands = [...H1_PATTERN].map((key, i) => {
  const x = 436 + i * H1_STEP;
  return [x - 2, x + 1.7, H1_COLORS[key]];
});

const Bands = ({ bands }) => bands.map(([a, b, color]) => (
  <rect key={a} x={a} y="380" width={b - a} height="140" fill={color === RED ? "#ff0000" : color} />
));

/* ---------- indicator series ---------- */

const goldM15Wave = [
  [[11, 584], [20, 586], [30, 588], [37, 586], [46, 584], [60, 586], [68, 583], [75, 574], [82, 558], [88, 545], [95, 531], [100, 527], [107, 527], [112, 530], [118, 532], [125, 540], [130, 545], [140, 551], [150, 559], [160, 568], [164, 575], [166, 584], [168, 592], [194, 592]],
  [[312, 586], [315, 585]],
];
const goldH1Wave = [[[436, 586], [446, 581], [457, 580], [466, 585], [473, 590], [480, 591], [486, 594], [491, 601], [495, 610], [502, 616], [508, 624], [516, 632], [527, 638], [543, 641], [550, 646], [560, 646], [567, 642], [571, 641], [578, 644], [585, 644], [592, 642], [598, 642], [604, 638], [608, 625], [611, 610], [614, 590], [618, 575], [624, 555], [632, 535], [640, 528], [646, 526], [652, 530], [656, 552], [662, 585], [667, 605], [671, 611], [678, 617], [685, 625], [694, 635], [703, 641], [713, 644], [728, 645]]];
const btcWave = [[[860, 593], [869, 593], [876, 597], [886, 597], [892, 588], [901, 570], [907, 565], [912, 558], [919, 542], [927, 536], [936, 530], [943, 537], [950, 549], [957, 564], [963, 580], [968, 595], [974, 607], [984, 607], [990, 610], [995, 616], [1005, 616], [1011, 630], [1020, 642], [1028, 647], [1034, 640], [1044, 622], [1050, 606], [1060, 592], [1073, 578], [1083, 572], [1090, 580], [1097, 579], [1104, 566], [1110, 550], [1119, 545], [1126, 544], [1133, 536], [1142, 527], [1147, 528], [1157, 528]]];

const GOLD_PRICES = ["4896.955", "4883.590", "4869.820", "4856.455", "4842.685", "4829.320", "4815.550", "4801.780", "4788.415", "4774.645", "4761.280", "4747.510", "4734.145"];
const BTC_PRICES = ["76399.20", "76174.80", "75950.40", "75719.20", "75494.80", "75270.40", "75039.20", "74814.80", "74590.40", "74359.20", "74134.80", "73910.40", "73686.00"];

const CHARTS = [
  {
    id: "gold-m15", name: "XAUUSDm,M15", origin: 11, Price: GoldM15Drawing, bands: goldM15Bands,
    histogram: "M15 Kumo Breakout Histo 1.0000", system: "2 EZ TRADING SYSTEM_Licensed -0.0656 -0.0656",
    wave: goldM15Wave, zero: 583.5, dots: [[11, 185], [317, 2400]], range: ["4.3045", "-4.6842"],
    prices: GOLD_PRICES, last: ["4799.055", 160],
    trend: { up: "73%", down: "27%", word: "[weak]", color: "#2c8a58", wordColor: "#d9893a", rule: "#2f7a48" },
    total: "0.0", gain: "+5001.8", net: "0.0",
    times: ["17 Apr 2026", "17 Apr 10:30", "17 Apr 14:30", "17 Apr 18:30", "19 Apr 23:31", "20 Apr 03:30", "20 Apr 07:30", "20 Apr 11:30"],
    banner: true,
  },
  {
    id: "gold-h1", name: "XAUUSDm,H1", origin: 436, active: true, Price: GoldH1Drawing, bands: goldH1Bands,
    histogram: "H1 Kumo Breakout Histo 1.0000", system: "2 EZ TRADING SYSTEM_Licensed -0.9869 -0.9869",
    wave: goldH1Wave, zero: 612.5, range: ["2.878", "-1.2315"],
    prices: GOLD_PRICES, last: ["4799.055", 160], levels: true, trade: true,
    total: "0.0", gain: "+5001.8", net: "0.0",
    times: ["16 Apr 2026", "16 Apr 11:00", "16 Apr 19:00", "17 Apr 04:00", "17 Apr 12:00", "17 Apr 20:00", "20 Apr 05:00"],
  },
  {
    id: "btc-m15", name: "BTCUSDm,M15", origin: 861, Price: BtcDrawing, bands: btcBands,
    histogram: "M15 Kumo Breakout Histo 1.0000", system: "2 EZ TRADING SYSTEM_Licensed 32.0054 32.0054",
    wave: btcWave, zero: 566.5, range: ["38.094", "-71.1637"],
    prices: BTC_PRICES, last: ["75280.96", 110],
    trend: { up: "81%", down: "19%", word: "[strong]", color: "#12f03a", wordColor: "#256e3a", rule: "#2fae3c" },
    total: "+2447.4", gain: "-5277.9", net: "13386.5", crowded: true,
    times: ["19 Apr 2026", "19 Apr 12:15", "19 Apr 16:15", "19 Apr 20:15", "20 Apr 00:15", "20 Apr 04:15", "20 Apr 08:15"],
    pointer: true,
  },
];

const Trend = ({ data }) => (
  <TrendPanel>
    <TrendRow><span>+</span><span>Trend</span><span>+</span></TrendRow>
    <TrendRule $color="#a8682c" $gap="0 0 3px" />
    <TrendRow $color="#d98a52"><TrendSide $up>UP</TrendSide><span>{data.up}</span></TrendRow>
    <TrendRow $color="#d98a52"><TrendSide>DOWN</TrendSide><span>{data.down}</span></TrendRow>
    <TrendRule $double $color={data.rule} $gap="3px 0 4px" />
    <TrendCall $color={data.color}>UP</TrendCall>
    <TrendRow $center $color={data.wordColor}>{data.word}</TrendRow>
    <TrendRule $double $color={data.rule} $gap="5px 0 0" />
  </TrendPanel>
);

const Trade = () => (
  <TradePanel onSubmit={(e) => e.preventDefault()}>
    <TradeTab type="button">SELL</TradeTab>
    <VolumeBox>
      <VolumeStep type="button" aria-label="Less volume">
        <svg width="5" height="3"><path d="M0 0h5L2.500 3z" fill="#222" /></svg>
      </VolumeStep>
      <VolumeInput aria-label="Volume" defaultValue="1.00" />
      <VolumeStep type="button" aria-label="More volume">
        <svg width="5" height="3"><path d="M0 3h5L2.500 0z" fill="#222" /></svg>
      </VolumeStep>
    </VolumeBox>
    <TradeTab type="button">BUY</TradeTab>
    <TradePrice type="button">4799<PriceBig>05</PriceBig><PricePip>5</PricePip></TradePrice>
    <TradePrice type="button">4799<PriceBig>36</PriceBig><PricePip>3</PricePip></TradePrice>
  </TradePanel>
);

const Banner = () => (
  <StreamBanner>
    <LikeBox><LikeWord>LIKE</LikeWord></LikeBox>
    <SubscribedBox>SUBSCRIBED</SubscribedBox>
    <BannerArt width="240" height="110" viewBox="127 544 240 110">
      <path d="M225 563c1-4 2-9 4-10 4 0 3 5 1 9l5 1v10h9c0 5-2 9-3 14-1 7-3 11-8 11h-16c-6 0-7-4-12-5-5-1-9-2-10-8l4-2z" fill="#050505" />
      <path d="M190 565c5 1 10 0 14-1 8-4 12-9 13-17 0-5 4-4 5 0 2 5-1 10-2 14h11c4 0 5 3 3 5 2 2 1 4 0 5 1 2 0 4-1 5 1 3-1 4-2 5 0 6-3 8-8 8h-14c-6 0-7-3-14-3-3-6-5-14-5-21z" fill="#fff" />
      <path d="M340 596c7-1 12 3 13 10 1 8-2 15 1 23h4v4h-44c-1-2 0-4 1-5l25-6z" fill="#050505" />
      <path d="M329 591c0-6 6-7 6 0 7 3 10 9 9 16-1 8-1 15 1 21 0 2-1 2-3 2l-37-7c-2-1-2-3 0-5 6-6 6-12 8-18 2-6 7-10 16-9z" fill="#fb0007" />
      <path d="M318 631l11 2c-2 6-9 5-11-2z" fill="#fb0007" />
      <path d="M187 642l4 5h6l3-5" fill="#ff0000" stroke="#f5d23c" strokeWidth="1" />
    </BannerArt>
  </StreamBanner>
);

const Chart = ({ chart }) => {
  const { id, origin, Price } = chart;
  return (
    <ChartWindow $active={chart.active}>
      <WindowTitle $active={chart.active}>
        <Icon size={11}>{ICONS.chartDoc}</Icon>
        <WindowName>{chart.name}</WindowName>
        <FrameButtons>
          <FrameButton type="button" aria-label="Minimize">
            <svg width="8" height="6"><rect x=".500" y="2.500" width="7" height="3" fill="#fff" stroke="#627282" /></svg>
          </FrameButton>
          <FrameButton type="button" aria-label="Maximize">
            <svg width="8" height="6"><rect x="1" y=".500" width="6" height="5" fill="#fff" stroke="#627282" /><path d="M3 3h2" stroke="#627282" /></svg>
          </FrameButton>
          <FrameButton type="button" aria-label="Close" $danger={chart.active}>
            <svg width="8" height="6">
              <path d="M1.500 .500l5 5M6.500 .500l-5 5" stroke={chart.active ? "#fff" : "#627282"} strokeWidth="2" />
              {!chart.active && <path d="M1.500 .500l5 5M6.500 .500l-5 5" stroke="#fff" strokeWidth=".8" />}
            </svg>
          </FrameButton>
        </FrameButtons>
      </WindowTitle>
      <ChartBody>
        <Pane $height={270} $rule={1}>
          <Plot>
            <Drawing>
              <g transform={`translate(${-origin} -113)`}><Price /></g>
              {chart.levels && <LevelNames />}
            </Drawing>
            {chart.trend && <Trend data={chart.trend} />}
            {chart.trade && <Trade />}
            <Readout>
              <ReadoutRow $gap={6}><span>0.0</span><ReadoutName>Long:</ReadoutName></ReadoutRow>
              <ReadoutRow $gap={6}><span>0.0</span><ReadoutName>Short</ReadoutName></ReadoutRow>
              <ReadoutTotal>{chart.total}</ReadoutTotal>
              <ReadoutRow $gap={6}>
                <ReadoutGain $crowded={chart.crowded}>{chart.gain}</ReadoutGain>
                <span>{chart.net}</span>
              </ReadoutRow>
            </Readout>
          </Plot>
          <PriceScale>
            {chart.prices.map((price) => <ScaleLabel key={price}>{price}</ScaleLabel>)}
            <PriceTag $top={chart.last[1]}>{chart.last[0]}</PriceTag>
          </PriceScale>
        </Pane>
        <Pane $height={135} $rule={2}>
          <Plot>
            <Drawing>
              <g transform={`translate(${-origin} -384)`}><Bands bands={chart.bands} /></g>
              <ChartText x="2" y="8">{chart.histogram}</ChartText>
            </Drawing>
          </Plot>
          <SideScale><ScaleLabel>1</ScaleLabel><ScaleLabel>0</ScaleLabel></SideScale>
        </Pane>
        <Pane $height={136} $rule={2}>
          <Plot>
            <Drawing>
              <g transform={`translate(${-origin} -519)`}>
                <Indicator id={id} runs={chart.wave} zero={chart.zero} dots={chart.dots} />
              </g>
              <ChartText x="2" y="8">{chart.system}</ChartText>
            </Drawing>
          </Plot>
          <SideScale>
            <ScaleLabel>{chart.range[0]}</ScaleLabel>
            <ScaleLabel>{chart.range[1]}</ScaleLabel>
            <ZeroTag $top={Math.round(chart.zero - 524)}>0.00</ZeroTag>
          </SideScale>
        </Pane>
        <TimeScale>
          {chart.times.map((time) => <TimeLabel key={time}>{time}</TimeLabel>)}
        </TimeScale>
      </ChartBody>
      {chart.banner && <Banner />}
      {chart.pointer && (
        <Pointer width="10" height="14" viewBox="0 0 10 14" aria-hidden="true">
          <path d="M1 1v10l2.500-2 1.500 4 2-1-1.500-3.500H9z" fill="#fff" stroke="#333" strokeWidth=".7" />
        </Pointer>
      )}
    </ChartWindow>
  );
};

export default function App() {
  return (
    <Screen>
      <GlobalStyle />
      <Shell>
        <AppTitle>
          <AppLogo />
          <TitleText>71753526: Exness-Trial10 - Demo Account - Exness Technologies Ltd - XAUUSDm,H1</TitleText>
          <SystemButtons>
            <SystemButton type="button" aria-label="Minimize">
              <svg width="8" height="8"><path d="M1 4.500h6" stroke="#222" /></svg>
            </SystemButton>
            <SystemButton type="button" aria-label="Maximize">
              <svg width="8" height="8"><rect x="1" y="1" width="6" height="6" rx="1" fill="none" stroke="#222" /></svg>
            </SystemButton>
            <SystemButton type="button" aria-label="Close">
              <svg width="8" height="8"><path d="M1 1l6 6M7 1L1 7" stroke="#222" /></svg>
            </SystemButton>
          </SystemButtons>
        </AppTitle>
        <MenuBar>
          {["File", "View", "Insert", "Charts", "Tools", "Window", "Help"].map((name) => (
            <MenuItem key={name} type="button">{name}</MenuItem>
          ))}
        </MenuBar>
        <ToolRow>
          <Tools items={MAIN_TOOLS} />
          <ToolSpacer />
          <ToolButton type="button" aria-label="Search"><Icon size={11}>{ICONS.search}</Icon></ToolButton>
          <ToolButton type="button" aria-label="Messages" $width={24}><Icon size={13}>{ICONS.chat}</Icon></ToolButton>
        </ToolRow>
        <ToolRow>
          <Tools items={LINE_TOOLS} />
        </ToolRow>
        <Workspace>
          {CHARTS.map((chart) => <Chart key={chart.id} chart={chart} />)}
        </Workspace>
        <TabStrip><ActiveTab /></TabStrip>
        <Ticker>
          <TickerText>Trading is risky.Trade at your own discreation!!!!!!!!!!!</TickerText>
        </Ticker>
      </Shell>
    </Screen>
  );
}
